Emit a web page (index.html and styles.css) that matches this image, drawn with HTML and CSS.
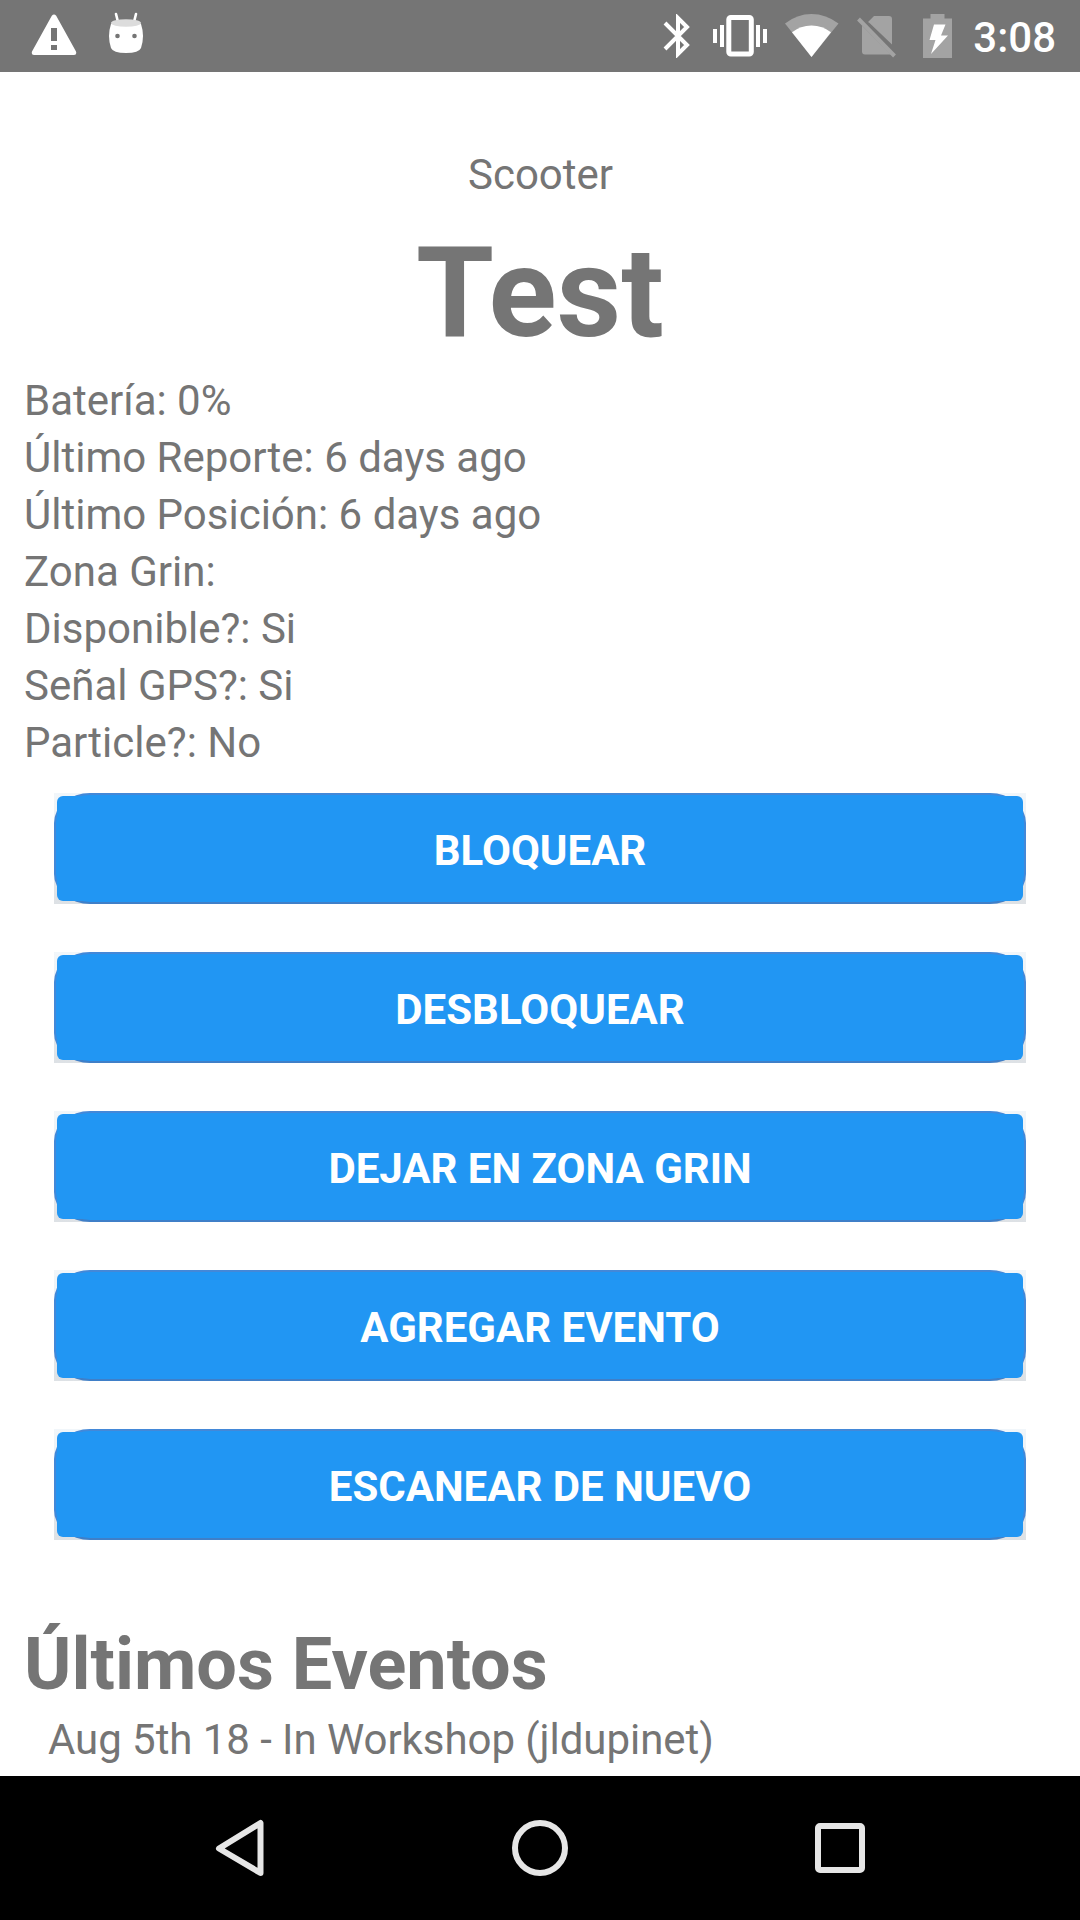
FILE: index.html
```
<!DOCTYPE html>
<html lang="es">
<head>
    <meta charset="UTF-8">
    <meta name="viewport" content="width=device-width, initial-scale=1.0">
    <title>Scooter</title>
    <link rel="stylesheet" href="styles.css">
</head>
<body>
    <header class="status-bar">
        <div class="notifications">
            <svg width="46" height="42" viewBox="0 0 46 42">
                <path fill="#fff" fill-rule="evenodd" d="M20.8 1.8Q23 -1 25.2 1.8L45 37.5Q46 41 43 41H3Q0 41 1 37.5ZM20 14V27H26V14ZM20 31V36H26V31Z"/>
            </svg>
            <svg width="36" height="42" viewBox="0 0 36 42">
                <path d="M8 2L10 10M28 2L26 10" stroke="#fff" stroke-width="2.6" stroke-linecap="round"/>
                <path fill="#fff" d="M3 12Q18 4 33 12Q37 24 33 36Q31 41 18 41Q5 41 3 36Q-1 24 3 12Z"/>
                <ellipse cx="18" cy="11" rx="15" ry="3.8" fill="#dcdcdc"/>
                <circle cx="9.5" cy="24" r="2.3" fill="#757575"/>
                <circle cx="26.5" cy="24" r="2.3" fill="#757575"/>
            </svg>
        </div>
        <div class="system">
            <svg class="bluetooth" width="28" height="44" viewBox="0 0 28 44">
                <path d="M2 9L24 31L15 40V4L24 13L2 35" fill="none" stroke="#fff" stroke-width="4"/>
            </svg>
            <svg class="vibrate" width="54" height="42" viewBox="0 0 54 42">
                <path fill="#fff" d="M0 14H4V28H0ZM7 10H11V32H7ZM43 10H47V32H43ZM50 14H54V28H50Z"/>
                <rect x="15.8" y="2.5" width="22.5" height="36.5" rx="2" fill="none" stroke="#fff" stroke-width="5"/>
            </svg>
            <svg class="wifi" width="54" height="43" viewBox="0 0 54 43">
                <path fill="#a3a3a3" d="M0 9.5Q12 0 26.5 0T53.5 9.5L26.5 43Z"/>
                <path fill="#fff" d="M7 18.3Q15.5 11.5 26.5 11.5T46 18.3L26.5 43Z"/>
            </svg>
            <svg class="no-sim" width="40" height="43" viewBox="0 0 40 43">
                <path fill="#a3a3a3" d="M11 6L17 0H32Q35 0 35 3V28.5L12.500 7ZM5 9.5L34 38.5H8Q5 38.5 5 35.5Z"/>
                <path d="M1.500 3L37.500 40" stroke="#a3a3a3" stroke-width="4"/>
            </svg>
            <svg class="battery" width="30" height="44" viewBox="0 0 30 44">
                <path fill="#a3a3a3" d="M0 4.5H7.5V0H21.5V4.5H29V44H0Z"/>
                <path fill="#fff" d="M11 10.5H22.5L18 21.500H25L8 40L12.500 26H6.500Z"/>
            </svg>
            <span class="clock">3:08</span>
        </div>
    </header>

    <main class="content">
        <p class="label">Scooter</p>
        <h1>Test</h1>
        <div class="details">
            <p>Batería: 0%</p>
            <p>Último Reporte: 6 days ago</p>
            <p>Último Posición: 6 days ago</p>
            <p>Zona Grin:</p>
            <p>Disponible?: Si</p>
            <p>Señal GPS?: Si</p>
            <p>Particle?: No</p>
        </div>
        <div class="actions">
            <button><span>BLOQUEAR</span></button>
            <button><span>DESBLOQUEAR</span></button>
            <button><span>DEJAR EN ZONA GRIN</span></button>
            <button><span>AGREGAR EVENTO</span></button>
            <button><span>ESCANEAR DE NUEVO</span></button>
        </div>
        <h2>Últimos Eventos</h2>
        <p class="event">Aug 5th 18 - In Workshop (jldupinet)</p>
    </main>

    <nav class="nav-bar">
        <svg width="60" height="60" viewBox="0 0 60 60">
            <path d="M50.500 5V55L9 30.500Z" fill="none" stroke="#e6e6e6" stroke-width="6" stroke-linejoin="round"/>
        </svg>
        <svg width="60" height="60" viewBox="0 0 60 60">
            <circle cx="30" cy="30" r="25" fill="none" stroke="#e6e6e6" stroke-width="6"/>
        </svg>
        <svg width="60" height="60" viewBox="0 0 60 60">
            <rect x="8" y="8" width="44" height="44" rx="2" fill="none" stroke="#e6e6e6" stroke-width="6"/>
        </svg>
    </nav>
</body>
</html>
```
FILE: styles.css
```
* { box-sizing: border-box; }
body {
    display: flex;
    flex-direction: column;
    height: 1920px;
    margin: 0;
    overflow: hidden;
    background-color: #fff;
    color: #757575;
    font-family: Roboto, sans-serif;
    font-size: 42px;
    line-height: 57px;
}
svg { display: block; flex: none; }
p, h1, h2 { margin: 0; }

.status-bar {
    display: flex;
    justify-content: space-between;
    height: 72px;
    padding: 14px 24px 0 31px;
    background-color: #757575;
}
.notifications { display: flex; gap: 31px; }
.notifications svg:last-child { margin-top: -2px; }
.system { display: flex; }
.bluetooth { margin-right: 22px; }
.vibrate { margin: 1px 18px 0 0; }
.wifi { margin-right: 18px; }
.no-sim { margin: 2px 26px 0 0; }
.battery { margin-right: 20px; }
.clock {
    margin-top: -5px;
    color: #fff;
    font-weight: 500;
}

.content {
    flex: 1;
    min-height: 0;
    padding: 74px 24px 0;
    overflow: hidden;
}
.label { padding-left: 1px; text-align: center; }
h1 {
    margin: 16px 0 5px;
    text-align: center;
    font-size: 126px;
    line-height: 148px;
}

.actions {
    display: flex;
    flex-direction: column;
    gap: 48px;
    padding: 22px 30px 0;
}
button {
    position: relative;
    height: 111px;
    padding: 3px;
    border: 0;
    background: linear-gradient(#f1f6fa, #dde1e5);
    color: #fff;
    font: bold 42px Roboto, sans-serif;
}
button::before {
    content: "";
    position: absolute;
    inset: 0;
    border: 2px solid #4388d8;
    border-bottom-color: #3f7fc8;
    border-radius: 36px / 30px;
    background-color: #2196f3;
}
/* flat fill sits over the rounded frame and squares off its corners */
button span {
    position: relative;
    display: flex;
    align-items: center;
    justify-content: center;
    height: 105px;
    padding-top: 3px;
    border-radius: 6px;
    background-color: #2196f3;
}

h2 {
    margin: 83px 0 4px;
    font-size: 72px;
    line-height: 84px;
}
.event { padding-left: 24px; letter-spacing: -0.06px; }

.nav-bar {
    display: flex;
    justify-content: center;
    gap: 240px;
    height: 144px;
    padding-top: 42px;
    background-color: #000;
}
```
